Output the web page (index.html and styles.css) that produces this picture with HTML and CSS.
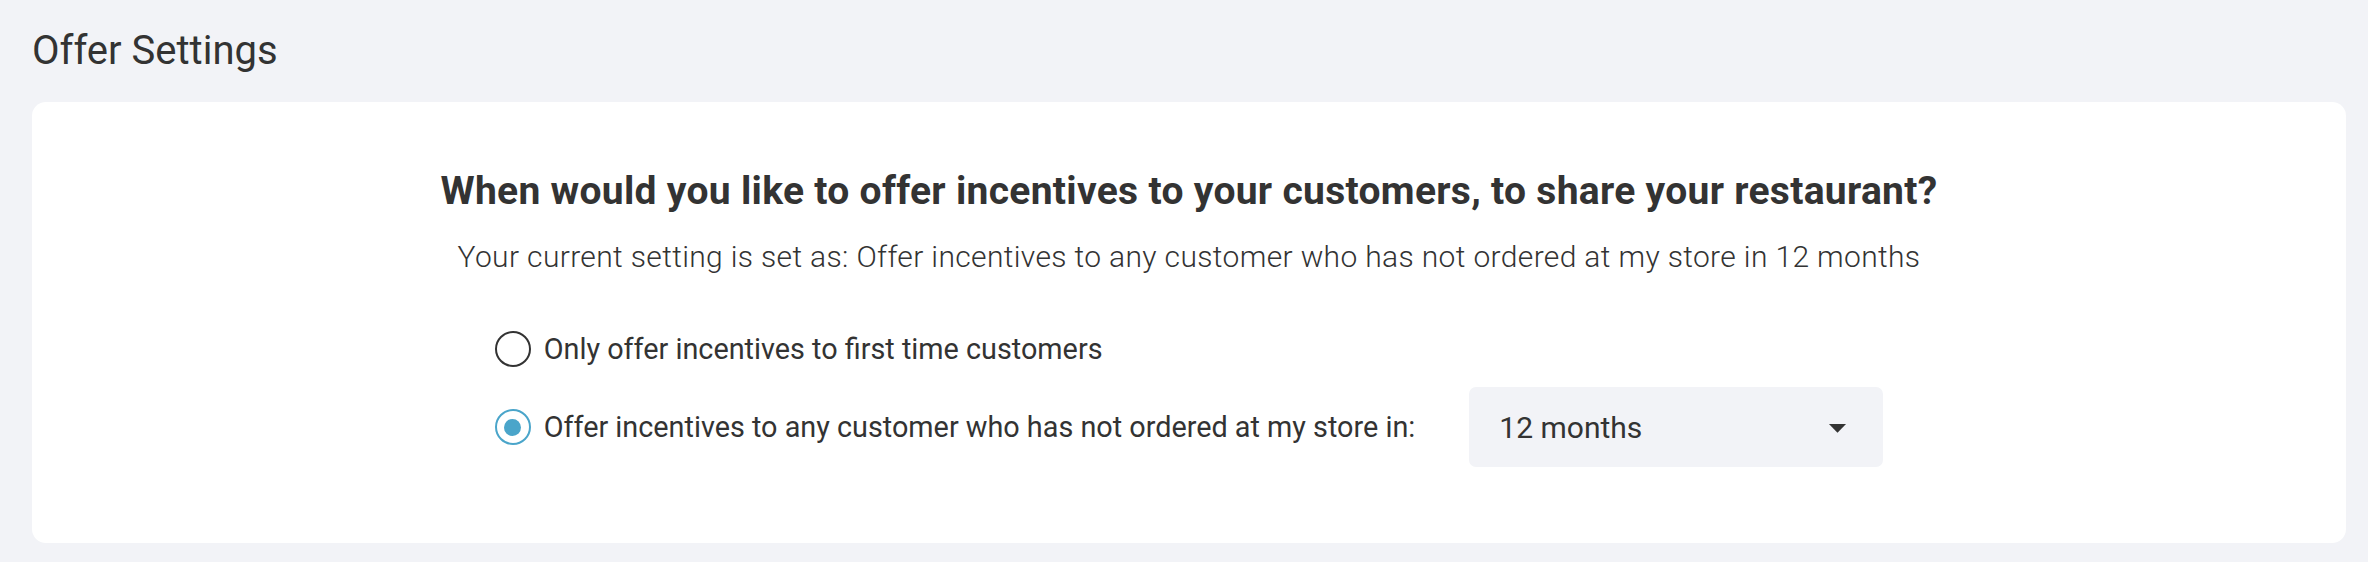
FILE: index.html
```html
<!DOCTYPE html>
<html lang="en">
<head>
  <meta charset="UTF-8" />
  <meta name="viewport" content="width=device-width, initial-scale=1.0">
  <title>Offer Settings</title>
  <link rel="stylesheet" href="styles.css">
</head>
<body>

  <div class="page">
    <h1 class="page-title">Offer Settings</h1>

    <div class="card">
      <h2 class="question">When would you like to offer incentives to your customers, to share your restaurant?</h2>
      <p class="current">Your current setting is set as: Offer incentives to any customer who has not ordered at my store in 12 months</p>

      <!-- Варианты -->
      <div class="options">
        <label class="option">
          <span class="radio"></span>
          <span class="option-text">Only offer incentives to first time customers</span>
        </label>

        <label class="option">
          <span class="radio checked"></span>
          <span class="option-text">Offer incentives to any customer who has not ordered at my store in:</span>
          <div class="select">
            <span>12 months</span>
            <svg class="arrow" viewBox="0 0 24 24" width="41" height="41"><path d="M7 10l5 5 5-5z" fill="#333"/></svg>
          </div>
        </label>
      </div>
    </div>
  </div>

</body>
</html>
```

FILE: styles.css
```css
body {
  font-family: Roboto, "Noto Sans", sans-serif;
  background-color: #f2f3f7;
  color: #333;
  margin: 0;
  padding: 0;
}

.page {
  padding: 27px 22px 18px 32px;
}

.page-title {
  font-size: 40px;
  line-height: 48px;
  font-weight: 400;
  margin: 0 0 27px 0;
  color: #333;
}

.card {
  background-color: #fff;
  border-radius: 14px;
  padding: 67px 40px 76px;
  display: flex;
  flex-direction: column;
  align-items: center;
}

.question {
  font-size: 39px;
  line-height: 44px;
  font-weight: 700;
  letter-spacing: 0.3px;
  margin: 0 0 26px 0;
  text-align: center;
}

.current {
  font-size: 30px;
  line-height: 36px;
  font-weight: 300;
  letter-spacing: 0.35px;
  margin: 0 0 56px 0;
  text-align: center;
}

.options {
  display: flex;
  flex-direction: column;
  gap: 20px;
}

.option {
  display: flex;
  align-items: center;
  min-height: 36px;
  font-size: 28.8px;
  cursor: pointer;
}

.radio {
  width: 36px;
  height: 36px;
  box-sizing: border-box;
  border: 2px solid #333;
  border-radius: 50%;
  margin-right: 13px;
  flex-shrink: 0;
  display: flex;
  align-items: center;
  justify-content: center;
}

.radio.checked {
  border-color: #4aa5ca;
}

.radio.checked::after {
  content: "";
  width: 17px;
  height: 17px;
  border-radius: 50%;
  background-color: #4aa5ca;
}

.select {
  width: 414px;
  height: 80px;
  margin-left: 54px;
  box-sizing: border-box;
  background-color: #f2f3f7;
  border-radius: 7px;
  padding: 0 25px 0 30px;
  display: flex;
  align-items: center;
  justify-content: space-between;
  font-size: 30px;
}
```
